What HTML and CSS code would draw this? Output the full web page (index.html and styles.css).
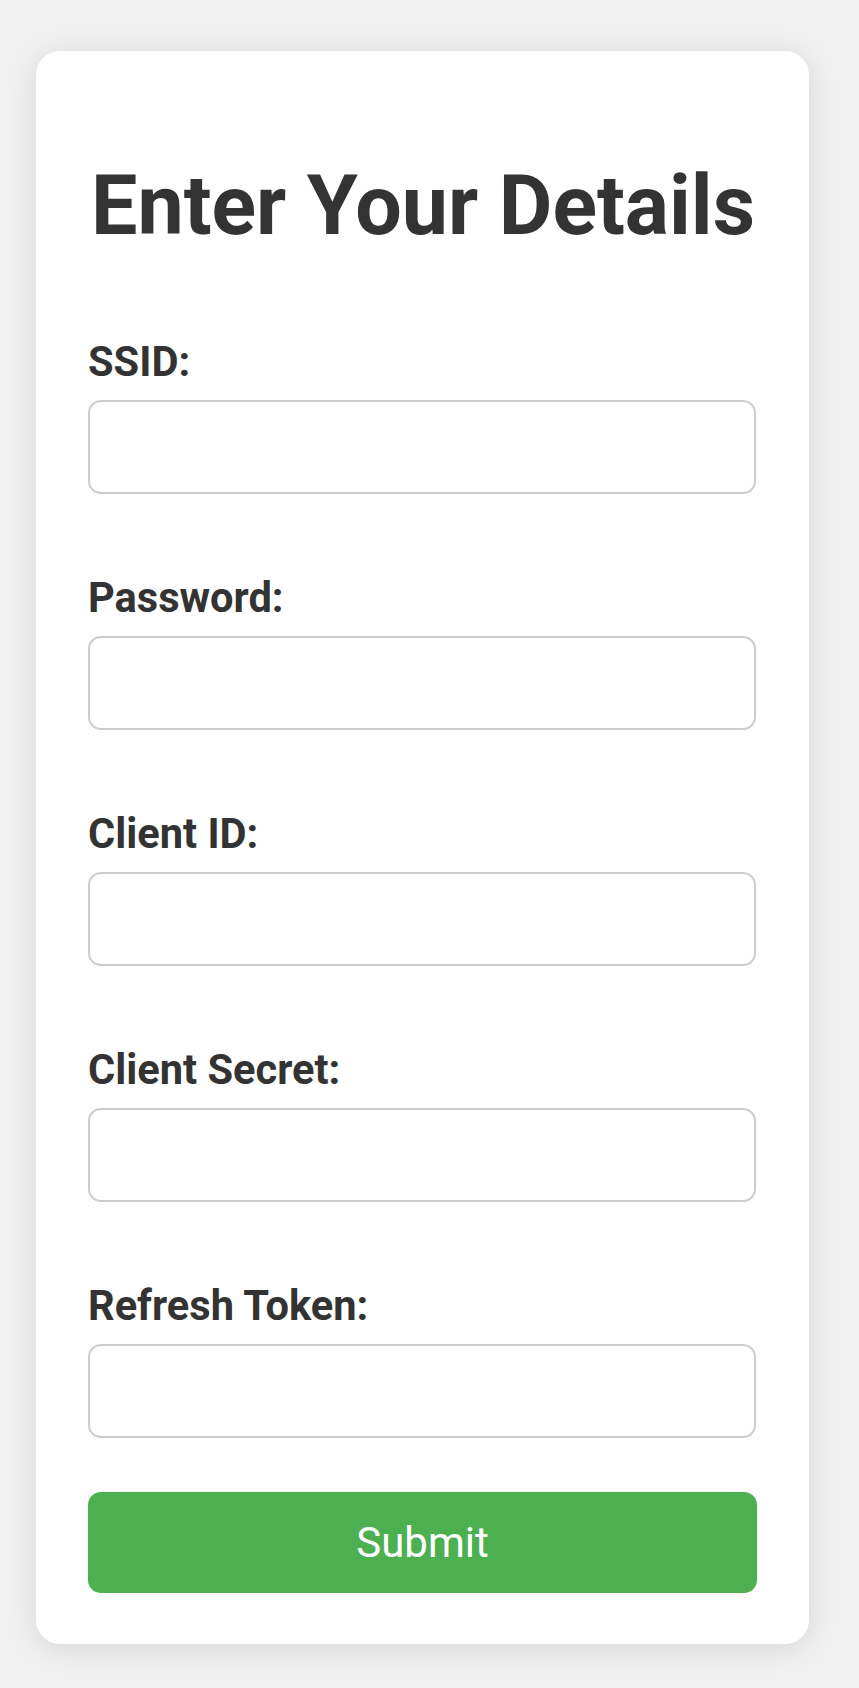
FILE: index.html
```html
<!DOCTYPE html>
<html lang="en">
<head>
<meta charset="utf-8">
<title>Enter Your Details</title>
<link rel="stylesheet" href="styles.css">
</head>
<body>
<div class="card">
  <h1 class="title">Enter Your Details</h1>
  <form class="form">
    <div class="field">
      <label class="label" for="ssid">SSID:</label>
      <input class="input" id="ssid" type="text">
    </div>
    <div class="field">
      <label class="label" for="password">Password:</label>
      <input class="input" id="password" type="password">
    </div>
    <div class="field">
      <label class="label" for="client-id">Client ID:</label>
      <input class="input" id="client-id" type="text">
    </div>
    <div class="field">
      <label class="label" for="client-secret">Client Secret:</label>
      <input class="input" id="client-secret" type="text">
    </div>
    <div class="field field-last">
      <label class="label" for="refresh-token">Refresh Token:</label>
      <input class="input" id="refresh-token" type="text">
    </div>
    <button class="submit" type="submit">Submit</button>
  </form>
</div>
</body>
</html>
```

FILE: styles.css
```css
html, body {
  margin: 0;
  padding: 0;
}

body {
  background: #f0f0f0;
  font-family: Roboto, "Liberation Sans", Arial, sans-serif;
  color: #333333;
  padding: 51px 0 40px 36px;
}

.card {
  width: 773px;
  box-sizing: border-box;
  padding: 52px 52px 51px 52px;
  background: #ffffff;
  border-radius: 24px;
  box-shadow: 0 4px 30px rgba(0, 0, 0, 0.1);
}

.title {
  margin: 54px 0 82px 0;
  font-size: 82.5px;
  line-height: 98px;
  font-weight: 700;
  color: #333333;
  padding-left: 3px;
  white-space: nowrap;
}

.form {
  display: flex;
  flex-direction: column;
}

.field {
  display: flex;
  flex-direction: column;
  margin-bottom: 79px;
}

.field-last {
  margin-bottom: 54px;
}

.label {
  font-size: 41.6px;
  line-height: 49px;
  font-weight: 700;
  color: #333333;
  margin-bottom: 14px;
}

.input {
  height: 94px;
  box-sizing: border-box;
  width: 668px;
  border: 2px solid #cccccc;
  border-radius: 13px;
  background: #ffffff;
  font-family: inherit;
  font-size: 36px;
  padding: 0 16px;
  margin: 0;
  outline: none;
}

.submit {
  height: 101px;
  width: 669px;
  border: none;
  border-radius: 13px;
  background: #4caf50;
  color: #ffffff;
  font-family: inherit;
  font-size: 42px;
  font-weight: 400;
  cursor: pointer;
  padding: 0;
}
```
